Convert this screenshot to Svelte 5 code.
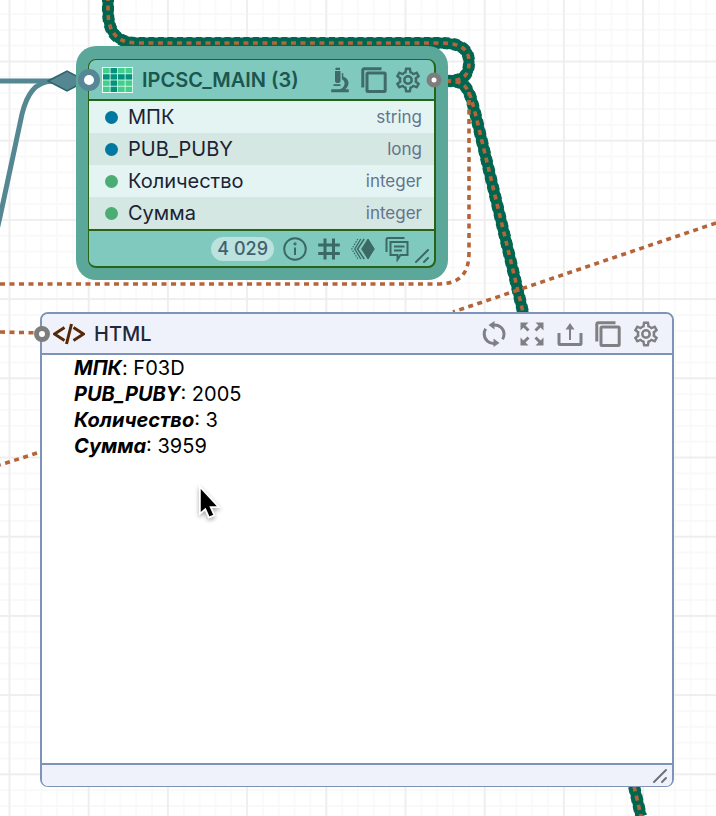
<script>
  const fields = [
    { name: 'МПК', type: 'string', kind: 'dimension' },
    { name: 'PUB_PUBY', type: 'long', kind: 'dimension' },
    { name: 'Количество', type: 'integer', kind: 'measure' },
    { name: 'Сумма', type: 'integer', kind: 'measure' },
  ];

  const record = [
    { key: 'МПК', value: 'F03D' },
    { key: 'PUB_PUBY', value: '2005' },
    { key: 'Количество', value: '3' },
    { key: 'Сумма', value: '3959' },
  ];

  const tableNode = { x: 76, y: 46, width: 372 };
  const htmlNode = { x: 40, y: 312, width: 634, height: 475 };

  const activeLinks = [
    'M108 -4 V10 C108 33 117 43 138 43 H440 C462 43 469 50 469 62 C469 76 463 81 446 81',
    'M446 81 C462 81 466 84 471 98 C474 108 477 120 480 133 L523 312 L641 816',
  ];

  const eventLinks = [
    'M0 284 H437 C460 284 469 274 469 252 V92',
    'M716 223 L453 312',
    'M37 453 L0 465',
    'M0 332 L42 333',
  ];

  const gear =
    'M12,8A4,4 0 0,1 16,12A4,4 0 0,1 12,16A4,4 0 0,1 8,12A4,4 0 0,1 12,8M12,10A2,2 0 0,0 10,12A2,2 0 0,0 12,14A2,2 0 0,0 14,12A2,2 0 0,0 12,10M10,22C9.75,22 9.54,21.82 9.5,21.58L9.13,18.93C8.5,18.68 7.96,18.34 7.44,17.94L4.95,18.95C4.73,19.03 4.46,18.95 4.34,18.73L2.34,15.27C2.21,15.05 2.27,14.78 2.46,14.63L4.57,12.97L4.5,12L4.57,11L2.46,9.37C2.27,9.22 2.21,8.95 2.34,8.73L4.34,5.27C4.46,5.05 4.73,4.96 4.95,5.05L7.44,6.05C7.96,5.66 8.5,5.32 9.13,5.07L9.5,2.42C9.54,2.18 9.75,2 10,2H14C14.25,2 14.46,2.18 14.5,2.42L14.87,5.07C15.5,5.32 16.04,5.66 16.56,6.05L19.05,5.05C19.27,4.96 19.54,5.05 19.66,5.27L21.66,8.73C21.79,8.95 21.73,9.22 21.54,9.37L19.43,11L19.5,12L19.43,13L21.54,14.63C21.73,14.78 21.79,15.05 21.66,15.27L19.66,18.73C19.54,18.95 19.27,19.04 19.05,18.95L16.56,17.95C16.04,18.34 15.5,18.68 14.87,18.93L14.5,21.58C14.46,21.82 14.25,22 14,22H10M11.25,4L10.88,6.61C9.68,6.86 8.62,7.5 7.85,8.39L5.44,7.35L4.69,8.65L6.8,10.2C6.4,11.37 6.4,12.64 6.8,13.8L4.68,15.36L5.43,16.66L7.86,15.62C8.63,16.5 9.68,17.14 10.87,17.38L11.24,20H12.76L13.13,17.39C14.32,17.14 15.37,16.5 16.14,15.62L18.57,16.66L19.32,15.36L17.2,13.81C17.6,12.64 17.6,11.37 17.2,10.2L19.31,8.65L18.56,7.35L16.15,8.39C15.38,7.5 14.32,6.86 13.12,6.62L12.75,4H11.25Z';
</script>

{#snippet gearIcon()}
  <svg class="icon" viewBox="1.5 1.5 21 21"><path d={gear} fill="currentColor" /></svg>
{/snippet}

{#snippet copyIcon()}
  <svg class="icon line" viewBox="0 0 26 26">
    <path d="M1.8 20.5V3.2a1.5 1.5 0 0 1 1.5-1.5H20.5" />
    <rect x="6" y="6" width="18.2" height="18.4" rx="1" />
  </svg>
{/snippet}

<main class="canvas">
  <svg class="links" width="100%" height="100%" aria-hidden="true">
    <defs>
      <pattern id="grid" width="100" height="100" patternUnits="userSpaceOnUse" patternTransform="translate(9.5 61.5) scale(0.792)">
        {#each [20, 40, 60, 80] as p}
          <path d="M{p} 0V100M0 {p}H100" stroke="#f8f8f8" stroke-width="1.8" />
        {/each}
        <path d="M0 0V100M0 0H100M100 0V100M0 100H100" stroke="#eee" stroke-width="2.4" />
      </pattern>
    </defs>
    <rect width="100%" height="100%" fill="url(#grid)" />

    <g class="data-link">
      <path d="M0 81H60" />
      <path d="M-4 234L0 217L22 114C27 94 35 82 52 81" />
    </g>
    <path class="arrow" d="M48 81L67 71L86 81L67 91Z" />

    {#each activeLinks as d}
      <path class="active-base" {d} />
      <path class="active-beads" {d} />
    {/each}
    {#each [...eventLinks, ...activeLinks] as d}
      <path class="event-link" {d} />
    {/each}
  </svg>

  <section class="table-node" style="left: {tableNode.x}px; top: {tableNode.y}px; width: {tableNode.width}px">
    <div class="table-card">
      <header class="table-header">
        <span class="port port-in"></span>
        <svg class="table-icon" viewBox="0 0 31 26" aria-hidden="true">
          <rect width="31" height="26" fill="#e9fff8" />
          {#each [0, 1, 2, 3] as row}
            {#each [0, 1, 2, 3] as col}
              <rect x={1 + col * 7.5} y={1 + row * 6.2} width="6.7" height="5.4" fill={row === 1 || col === 1 ? '#05917c' : '#42cf8b'} />
            {/each}
          {/each}
        </svg>
        <h2 class="title">IPCSC_MAIN (3)</h2>
        <div class="tools">
          <button type="button" aria-label="Explore">
            <svg class="icon" viewBox="0 0 26 26" fill="currentColor">
              <path d="M8.500 .8h4.500v2.200H8.500zM8 4h5.500v10.500l-1.400 1.500H9.400L8 14.500z" />
              <path d="M6.500 17.200h7v1.800h-7z" />
              <path d="M14.800 6l1.500 .2v3.500c3 .8 5.200 3.200 5.200 6.300 0 2.500-1.300 4.700-3.300 6.200h3.600v3H4.200v-3h8.400c3.200-.6 5-2.900 5-5.900 0-1.700-.9-3.300-2.800-4.100z" />
            </svg>
          </button>
          <button type="button" aria-label="Copy table">{@render copyIcon()}</button>
          <button type="button" aria-label="Table settings">{@render gearIcon()}</button>
        </div>
        <span class="port port-out"></span>
      </header>

      <ul class="fields">
        {#each fields as field}
          <li>
            <span class="dot {field.kind}"></span>
            <span class="name">{field.name}</span>
            <span class="type">{field.type}</span>
          </li>
        {/each}
      </ul>

      <footer class="table-footer">
        <span class="count">4 029</span>
        <button type="button" aria-label="Info">
          <svg class="icon line thin" viewBox="0 0 26 26">
            <circle cx="13" cy="13" r="10.8" />
            <path d="M13 11.500V19" />
            <circle cx="13" cy="7.800" r=".6" />
          </svg>
        </button>
        <button type="button" aria-label="Numbers">
          <svg class="icon line" viewBox="0 0 26 26"><path d="M9 2.500V23.500M17.500 2.500V23.500M2.200 9H23.800M2.200 17.500H23.800" /></svg>
        </button>
        <button type="button" aria-label="Transform">
          <svg class="icon" viewBox="0 0 26 26" fill="none" stroke="currentColor">
            <path d="M18 3L24.300 13L18 23L11.700 13Z" fill="currentColor" />
            <path d="M14.200 3L7.500 13L14.200 23" stroke-width="1.500" />
            <path d="M10.800 3L4.800 13L10.800 23" stroke-width="1.300" />
            <path d="M7.800 3L1.800 13L7.800 23" stroke-width="1.200" stroke-dasharray="1.500 1.200" />
          </svg>
        </button>
        <button type="button" aria-label="Comments">
          <svg class="icon line thin" viewBox="0 0 26 26">
            <path d="M2.500 16V3.500Q2.500 2 4 2H20.500" />
            <path d="M6.500 6H23.500V19H16.500L13.500 23.500V19H6.500Z" />
            <path d="M10 10.500H20.500M10 14.500H18" />
          </svg>
        </button>
        <svg class="grip" viewBox="0 0 18 18" aria-hidden="true"><path d="M3 15L15 3M11 15L15 11" /></svg>
      </footer>
    </div>
  </section>

  <section class="html-node" style="left: {htmlNode.x}px; top: {htmlNode.y}px; width: {htmlNode.width}px; min-height: {htmlNode.height}px">
    <header class="html-header">
      <span class="port port-html"></span>
      <svg class="code-icon" viewBox="0 0 32 22" aria-hidden="true">
        <path d="M11.500 4.500L1.500 11L11.500 17.500M20.500 4.500L30.500 11L20.500 17.500M18.500 1L13.500 21" />
      </svg>
      <h2 class="title">HTML</h2>
      <div class="tools">
        <button type="button" aria-label="Refresh">
          <svg class="icon line" viewBox="0 0 26 26">
            <path d="M11 4.200C18 2.700 23.200 7.500 23 13.500Q22.900 16 21.500 18.300" />
            <path d="M15 22.300C8 23.700 3 18.500 3.200 12.500Q3.300 10 4.700 7.700" />
            <path d="M7.500 4L13.500 0V8.500ZM18.500 22L12.500 17.500V26Z" fill="currentColor" stroke="none" />
          </svg>
        </button>
        <button type="button" aria-label="Full screen">
          <svg class="icon line" viewBox="0 0 26 26">
            <path d="M3 3L9.500 9.500M23 3L16.500 9.500M3 23L9.500 16.500M23 23L16.500 16.500" />
            <path d="M1.500 1.500H9.500L1.500 9.500ZM24.500 1.500H16.500L24.500 9.500ZM1.500 24.500H9.500L1.500 16.500ZM24.500 24.500H16.500L24.500 16.500Z" fill="currentColor" stroke="none" />
          </svg>
        </button>
        <button type="button" aria-label="Export">
          <svg class="icon line" viewBox="0 0 26 26">
            <path d="M2 12V22.500Q2 23.500 3 23.500H23Q24 23.500 24 22.500V12" />
            <path d="M13 19V7" stroke-width="2" />
            <path d="M13 2L17.500 8.500H8.500Z" fill="currentColor" stroke="none" />
          </svg>
        </button>
        <button type="button" aria-label="Copy view">{@render copyIcon()}</button>
        <button type="button" aria-label="View settings">{@render gearIcon()}</button>
      </div>
    </header>
    <div class="html-body">
      {#each record as item}
        <div><b><i>{item.key}</i></b>: {item.value}</div>
      {/each}
    </div>
    <footer class="html-footer">
      <svg class="grip" viewBox="0 0 18 18" aria-hidden="true"><path d="M3 15L15 3M11 15L15 11" /></svg>
    </footer>
  </section>

  <svg class="cursor" viewBox="0 0 28 42" aria-hidden="true">
    <path d="M5 3V33L11 28L15 37L21 34.500L17 25.500H26Z" />
  </svg>
</main>

<style>
  :global(body) {
    margin: 0;
    background: #fff;
  }

  .canvas {
    position: relative;
    min-height: 100vh;
    overflow: hidden;
    background: #fff;
    font-family: Inter, 'Liberation Sans', sans-serif;
  }

  .links {
    position: absolute;
    inset: 0;
  }

  .links path {
    fill: none;
  }

  .data-link {
    stroke: #548792;
    stroke-width: 5;
  }

  .links .arrow {
    fill: #548792;
    stroke: #2e626d;
    stroke-width: 1.5;
  }

  .active-base {
    stroke: #01664f;
    stroke-width: 11;
  }

  .active-beads {
    stroke: #01664f;
    stroke-width: 12;
    stroke-dasharray: 6 3.5;
  }

  .event-link {
    stroke: #b5643a;
    stroke-width: 3.6;
    stroke-dasharray: 5 4.5;
  }

  button {
    display: flex;
    padding: 0;
    border: 0;
    background: none;
    color: inherit;
    cursor: pointer;
  }

  .icon {
    display: block;
    width: 26px;
    height: 26px;
  }

  .line {
    fill: none;
    stroke: currentColor;
    stroke-width: 3;
  }

  .thin {
    stroke-width: 2;
  }

  .grip {
    width: 18px;
    height: 18px;
    fill: none;
    stroke: currentColor;
    stroke-width: 2;
    stroke-linecap: round;
  }

  .title {
    margin: 0;
    font-size: 20px;
    line-height: 26px;
    font-weight: 600;
    white-space: nowrap;
  }

  .tools {
    display: flex;
    margin-left: auto;
  }

  .port {
    position: absolute;
    top: 50%;
    box-sizing: border-box;
    border-radius: 50%;
    background: #fff;
    transform: translate(-50%, -50%);
  }

  .port-in {
    left: 0;
    width: 22px;
    height: 22px;
    border: 6px solid #578796;
  }

  .port-out {
    left: 100%;
    width: 15px;
    height: 15px;
    border: 5px solid #7d7d7d;
  }

  .port-html {
    left: 0;
    width: 16px;
    height: 16px;
    border: 5px solid #7d7d7d;
  }

  .table-node {
    position: absolute;
    box-sizing: border-box;
    padding: 13px 12px 12px;
    border-radius: 20px;
    background: #5ba79a;
  }

  .table-card {
    border: 1px solid #286316;
    border-right-width: 2px;
    border-bottom-width: 2px;
    border-radius: 8px;
    background: #80c9be;
  }

  .table-header {
    position: relative;
    display: flex;
    align-items: center;
    height: 39px;
    padding: 0 13px;
    border-bottom: 2px solid #286316;
    color: #3f6c68;
  }

  .table-header .title {
    margin-left: 9px;
    color: #1b564f;
  }

  .table-header .tools {
    gap: 8px;
  }

  .table-icon {
    width: 31px;
    height: 26px;
  }

  .fields {
    margin: 0;
    padding: 0;
    list-style: none;
  }

  .fields li {
    display: flex;
    align-items: center;
    height: 32px;
    padding: 0 12px 0 16px;
    background: #e4f4f3;
  }

  .fields li:nth-child(even) {
    background: #d5e7e2;
  }

  .dot {
    width: 13px;
    height: 13px;
    margin-right: 10px;
    border-radius: 50%;
  }

  .dimension {
    background: #0277a0;
  }

  .measure {
    background: #4bac74;
  }

  .name {
    font-size: 20px;
    color: #1b2233;
  }

  .type {
    margin-left: auto;
    font-size: 17px;
    color: #64748f;
  }

  .table-footer {
    position: relative;
    display: flex;
    align-items: center;
    justify-content: flex-end;
    gap: 8px;
    height: 35px;
    padding-right: 24px;
    border-top: 2px solid #286316;
    color: #3b6964;
  }

  .count {
    padding: 0 6px;
    border-radius: 12px;
    background: #bce2dd;
    color: #426070;
    font-size: 18px;
    line-height: 24px;
    font-weight: 500;
  }

  .table-footer .grip {
    position: absolute;
    right: 3px;
    bottom: 1px;
  }

  .html-node {
    position: absolute;
    box-sizing: border-box;
    display: flex;
    flex-direction: column;
    border: 2px solid #7d93b7;
    border-bottom-width: 1px;
    border-radius: 8px;
    background: #fff;
  }

  .html-header {
    position: relative;
    display: flex;
    align-items: center;
    height: 39px;
    padding: 0 13px 0 11px;
    border-bottom: 2px solid #7d93b7;
    border-radius: 6px 6px 0 0;
    background: #eff2fa;
    color: #7f8083;
  }

  .html-header .title {
    margin-left: 9px;
    color: #1e293b;
    font-weight: 500;
  }

  .html-header .tools {
    gap: 12px;
  }

  .code-icon {
    width: 32px;
    height: 22px;
    fill: none;
    stroke: #572808;
    stroke-width: 3;
  }

  .html-body {
    flex: 1;
    padding: 0 32px;
    color: #000;
    font-size: 20px;
    line-height: 26px;
  }

  .html-footer {
    display: flex;
    align-items: center;
    justify-content: flex-end;
    height: 21px;
    padding-right: 3px;
    border-top: 2px solid #7d93b7;
    border-radius: 0 0 6px 6px;
    background: #eff2fa;
    color: #6f7178;
  }

  .cursor {
    position: absolute;
    left: 195px;
    top: 484px;
    width: 26px;
    height: 38px;
    overflow: visible;
    fill: #000;
    stroke: #fff;
    stroke-width: 2;
    filter: drop-shadow(0 2px 2px rgba(0, 0, 0, 0.35));
  }
</style>
